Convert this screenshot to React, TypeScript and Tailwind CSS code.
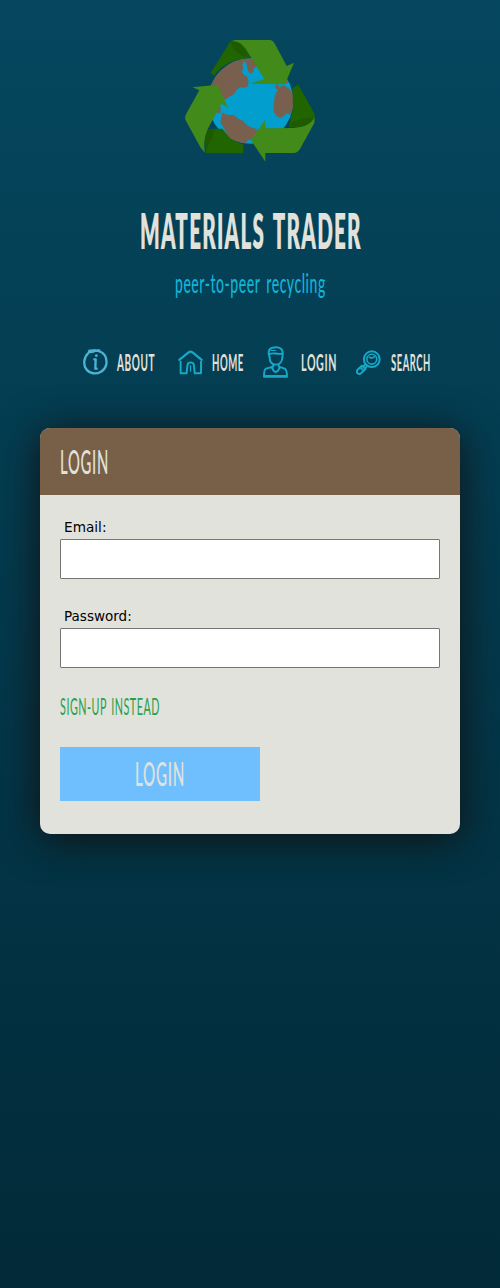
import { useLayoutEffect, useRef, useState } from "react";
import type { ReactNode } from "react";

/** Draws a line of text condensed (or widened) to a given width. */
function Fit({ width, box, children }: { width: number; box: string; children: ReactNode }) {
  const ref = useRef<HTMLSpanElement>(null);
  const [scale, setScale] = useState(1);
  useLayoutEffect(() => {
    if (ref.current) setScale(width / ref.current.offsetWidth);
  }, [width]);
  return (
    <span className={"block overflow-visible whitespace-nowrap " + box}>
      <span ref={ref} className="inline-block origin-left" style={{ transform: `scaleX(${scale})` }}>
        {children}
      </span>
    </span>
  );
}

function Logo() {
  return (
    <svg viewBox="0 0 450 420" className="h-[140px] w-[150px]">
      <clipPath id="globe">
        <circle cx="227" cy="213" r="128" />
      </clipPath>
      <g clipPath="url(#globe)">
        <path fill="#029fce" d="M90 80h270v270H90z" />
        <path
          fill="#795f4e"
          d="M90 176V80h134l30 12-7 17-10 5-2 11-7 6-8-5-4-16-3-12-7-4-4 11 3 10-4 10 5 9 9 5 6 14-3 16-8 4-15-1-10 7-8 14-15 7-9 8h-8l-5-8-18-8zM324 166c22 8 40 30 40 50 0 14-15 26-20 38l-9-4-7 7-12 7-11-5-8-13-2-14 2-18 3-20 8-14 8-10zM299 170l7-8 7 6v8l-10 1zM142 248l14 6 21 1 14 12 13 5 10 12 14 8 20 6-6 18-13 12-11 3-8 14-40-4-12-26-12-22-10-16zM124 222l14 12-2 16-12-3zM330 146l10 10-6 6z"
        />
      </g>
      <path fill="#216500" d="M166 34 107 129l10 8c25-33 60-51 109-53l-10-29-22-18z" />
      <path fill="#1d5a00" d="m167 35 29 3 29 46-25-7-25-20z" />
      <path fill="#428a1a" d="M168 34c8-3 11-4 17-4h98c8 0 13 5 17 12l35 66 22-10-27 65-105-2 43-14-45-73c-12-24-29-43-55-40z" />
      <path fill="#216500" d="m92 368 12-71 38-1 25 30 38 18v26H98z" />
      <path fill="#1d5a00" d="m91 361-3-30 8-32h22l-6 24z" />
      <path fill="#428a1a" d="m52 172 76-8 31 69-20-12-36 67c-14 26-18 50-13 80l-13-15-44-80c-4-7-3-13 0-20l40-72z" />
      <path fill="#216500" d="m370 164 47 85c4 8 3 15-2 22l-38 21h-35l12-60-2-58z" />
      <path fill="#1d5a00" d="m343 292 8-16 34-10 32-4-9 19-26 12z" />
      <path fill="#428a1a" d="m270 270-42 61 43 64v-26h85c9 0 15-5 19-12l43-78 1-17c-8 15-23 26-43 29l-20 3-85 1z" />
    </svg>
  );
}

function AboutIcon() {
  return (
    <svg viewBox="0 0 75 78" className="h-[26px] w-[25px]" fill="none" stroke="#4bb4d3" strokeLinecap="round" strokeLinejoin="round">
      <path strokeWidth="7" d="M18 8C33 1 58 4 67 22c8 19 2 38-13 46-15 9-34 6-44-7C0 48 2 25 16 12M19 5l30-1M20 9l12-1" />
      <path strokeWidth="7" d="M34 31h4l-1 28h4" />
      <circle cx="40" cy="20" r="2" strokeWidth="4" />
    </svg>
  );
}

function HomeIcon() {
  return (
    <svg viewBox="0 0 76 74" className="h-[25px] w-[25px]" fill="none" stroke="#16a8c8" strokeWidth="6" strokeLinecap="round" strokeLinejoin="round">
      <path strokeWidth="7" d="M4 29 32 6c4-3 8-3 12 0l28 23" />
      <path d="M8 35v35h18l3-26c2-9 17-9 19 0l3 26h19V35" />
      <path strokeWidth="4" d="M38 47v16" />
    </svg>
  );
}

function LoginIcon() {
  return (
    <svg viewBox="0 0 76 96" className="h-[32px] w-[25px]" fill="none" stroke="#16a8c8" strokeWidth="6" strokeLinecap="round" strokeLinejoin="round">
      <path d="M19 31C13 11 22 3 39 3c16-1 24 9 20 28M20 24c10-6 20 1 37-1M20 31c0 17 8 25 19 25s20-8 20-25M31 54v8L9 68c-5 2-6 8-6 25h70c0-16-1-22-7-25l-18-6v-8M27 63c2 8 7 14 12 16 6-3 10-8 12-16" />
      <path strokeWidth="3" d="M5 89h66M24 13h15" />
    </svg>
  );
}

function SearchIcon() {
  return (
    <svg viewBox="0 0 76 74" className="h-[25px] w-[25px]" fill="none" stroke="#16a8c8" strokeWidth="6" strokeLinecap="round" strokeLinejoin="round">
      <circle cx="48" cy="27" r="24" />
      <circle cx="48" cy="27" r="15" strokeWidth="5" />
      <path d="M41 21c4 3 11 2 14-1M27 44l-5 5M32 50l-5 5M18 47 4 60c-5 7 4 15 11 10l14-13zM15 54l7 7" />
    </svg>
  );
}

export default function App() {
  return (
    <main className="flex h-[1288px] w-full flex-col items-center overflow-x-clip bg-linear-to-b from-[#05475f] to-[#022a38] pt-[30px] font-['Lato',sans-serif] text-[#e1e2dc]">
      <Logo />
      <h1 className="mt-[30px] text-[49px] leading-[60px] font-extrabold tracking-[0.06em] [word-spacing:0.12em]">
        <Fit width={222} box="w-[221px]">MATERIALS TRADER</Fit>
      </h1>
      <p className="mt-[8px] text-[26px] leading-[30px] font-medium tracking-[0.04em] text-[#13b5d7] [word-spacing:0.15em]">
        <Fit width={151} box="w-[150px]">peer-to-peer recycling</Fit>
      </p>
      <nav className="mt-[47px] flex h-[34px] w-full items-center pl-[83px] text-[23px] leading-[34px] font-bold tracking-[0.06em]">
        <a className="flex items-center gap-[9px]">
          <AboutIcon />
          <Fit width={38} box="w-[38px]">ABOUT</Fit>
        </a>
        <a className="ml-[23px] flex items-center gap-[9px]">
          <HomeIcon />
          <Fit width={32} box="w-[32px]">HOME</Fit>
        </a>
        <a className="ml-[19px] flex items-center gap-[13px]">
          <LoginIcon />
          <Fit width={36} box="w-[36px]">LOGIN</Fit>
        </a>
        <a className="ml-[19px] flex items-center gap-[10px]">
          <SearchIcon />
          <Fit width={40} box="w-[40px]">SEARCH</Fit>
        </a>
      </nav>
      <section className="mt-[49px] h-[406px] w-[420px] shrink-0 overflow-hidden rounded-[10px] bg-[#e1e2dc] shadow-[0_5px_40px_#111]">
        <h2 className="h-[67px] bg-[#785f47] pl-[20px] text-[33px] leading-[66px] font-medium tracking-[0.05em]">
          <Fit width={49} box="w-[49px]">LOGIN</Fit>
        </h2>
        <form className="flex flex-col px-[20px] pt-[23px]">
          <label className="pl-[4px] font-['DejaVu_Sans',sans-serif] text-[13.33px] leading-[20px] text-black">
            <Fit width={42} box="w-[42px]">Email:</Fit>
          </label>
          <input className="mt-[1px] h-[40px] rounded-[1px] border border-[#767676] bg-white px-2 text-black outline-none" />
          <label className="mt-[28px] pl-[4px] font-['DejaVu_Sans',sans-serif] text-[13.33px] leading-[20px] text-black">
            <Fit width={68} box="w-[68px]">Password:</Fit>
          </label>
          <input type="password" className="mt-[1px] h-[40px] rounded-[1px] border border-[#767676] bg-white px-2 text-black outline-none" />
          <a className="mt-[23px] text-[24px] leading-[30px] tracking-[0.05em] text-[#28a04b] [word-spacing:0.1em]">
            <Fit width={100} box="w-[100px]">SIGN-UP INSTEAD</Fit>
          </a>
          <button type="button" className="mt-[26px] flex h-[54px] w-[200px] items-center justify-center bg-[#6fbfff] pb-[2px] text-[33px] leading-[52px] font-medium tracking-[0.05em]">
            <Fit width={50} box="w-[50px]">LOGIN</Fit>
          </button>
        </form>
      </section>
    </main>
  );
}
